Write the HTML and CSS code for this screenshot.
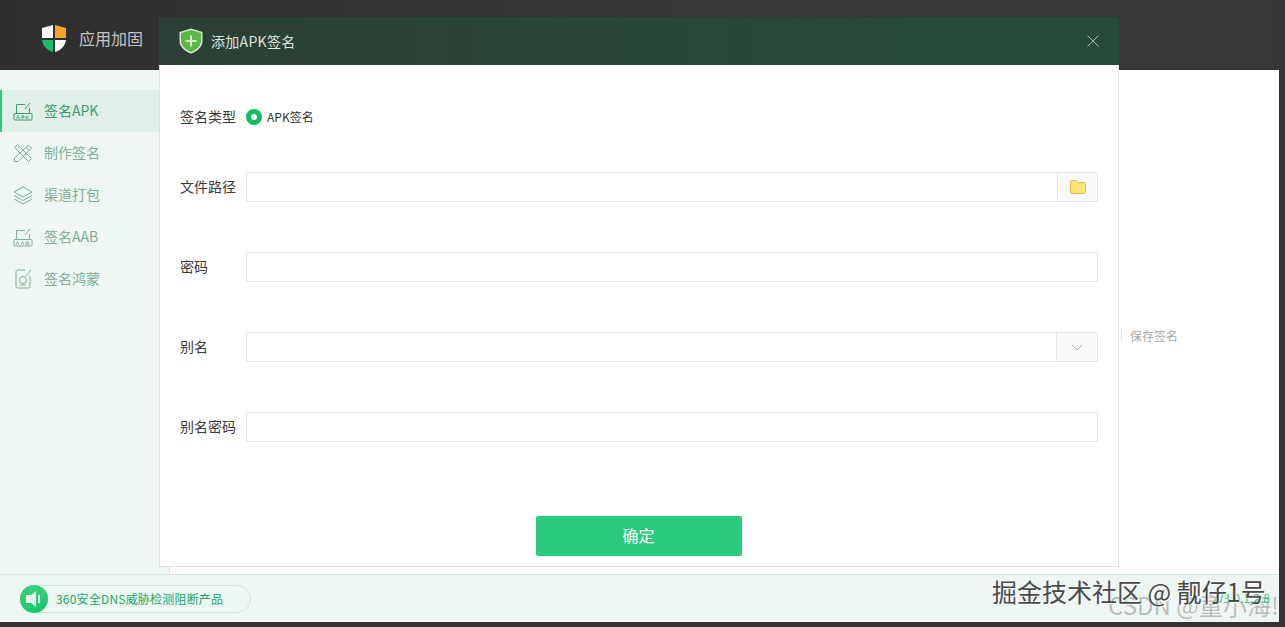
FILE: index.html
```html
<!DOCTYPE html>
<html lang="zh">
<head>
<meta charset="utf-8">
<title>应用加固</title>
<link rel="stylesheet" href="styles.css">
</head>
<body>
<div class="app">
  <header class="topbar">
    <svg class="logo" width="24" height="28" viewBox="0 0 24 28">
      <path d="M0 3 11 0V13H0Z" fill="#fff"/>
      <path d="M13 0 24 3V13H13Z" fill="#f8a524"/>
      <path d="M0 15H11V27C5 25 1 21 0 15Z" fill="#12c06a"/>
      <path d="M13 15H24C23 21 19 25 13 27Z" fill="#fff"/>
    </svg>
    <span class="app-title">应用加固</span>
  </header>
  <div class="middle">
    <nav class="sidebar">
      <a class="nav-item active">
        <svg class="nav-icon" width="20" height="20" viewBox="0 0 20 20" fill="none" stroke="currentColor"><path d="M3.500 12V3.500H12M17 2 12 8M16.500 7V12"/><rect x="1" y="12.500" width="18" height="6.500" rx="1"/><path d="M3.500 18 5 14.500 6.500 18M9 18V14.800H11V16.500H9M13 14.800V18M16 14.800 13.500 16.500 16 18" stroke-width=".8"/></svg>
        <span class="nav-text">签名APK</span>
      </a>
      <a class="nav-item">
        <svg class="nav-icon" width="20" height="20" viewBox="0 0 20 20" fill="none" stroke="currentColor"><path d="M4.500 1.500 1.500 4.500 15.500 18.500 18.500 15.500ZM15.500 2 18.500 5 5 18.500 1.500 18.500 1.500 15ZM13 4.500 16 7.500M6.500 3.500 5 5M10 7 8.500 8.500M13.500 10.500 12 12"/></svg>
        <span class="nav-text">制作签名</span>
      </a>
      <a class="nav-item">
        <svg class="nav-icon" width="20" height="20" viewBox="0 0 20 20" fill="none" stroke="currentColor"><path d="M10 2 19 7 10 12 1 7ZM1 10.500 10 15.500 19 10.500M1 14 10 19 19 14"/></svg>
        <span class="nav-text">渠道打包</span>
      </a>
      <a class="nav-item">
        <svg class="nav-icon" width="20" height="20" viewBox="0 0 20 20" fill="none" stroke="currentColor"><path d="M3.500 12V3.500H12M17 2 12 8M16.500 7V12"/><rect x="1" y="12.500" width="18" height="6.500" rx="1"/><path d="M3 18 4.500 14.500 6 18M8 18 9.500 14.500 11 18M13 14.800V18H15.500C16.500 18 16.500 16.400 15.500 16.400H13M13 14.800H15.500C16.200 14.800 16.200 16.400 15.500 16.400" stroke-width=".8"/></svg>
        <span class="nav-text">签名AAB</span>
      </a>
      <a class="nav-item">
        <svg class="nav-icon" width="20" height="20" viewBox="0 0 20 20" fill="none" stroke="currentColor"><path d="M12 1H5C3.500 1 3 2 3 3V17C3 18.500 3.500 19 5 19H15C16.500 19 17 18.500 17 17V7M18 1 13 7"/><circle cx="10" cy="11" r="3.500"/><path d="M7 16H13"/></svg>
        <span class="nav-text">签名鸿蒙</span>
      </a>
    </nav>
    <main class="content">
      <div class="save-sign"><span class="save-label">保存签名</span></div>
    </main>
  </div>
  <footer class="footer">
    <div class="pill">
      <span class="pill-icon">
        <svg width="18" height="18" viewBox="0 0 18 18" fill="#fff"><path d="M1 5H6L11 1V17L6 13H1Z" fill-opacity=".85"/><rect x="13" y="5" width="2" height="8"/></svg>
      </span>
      <span class="pill-text">360安全DNS威胁检测阻断产品</span>
    </div>
    <span class="version">V3.0.1.2.8</span>
  </footer>
</div>

<section class="dialog">
  <header class="dialog-head">
    <svg class="shield" width="24" height="26" viewBox="0 0 24 26">
      <path d="M12 .5 23.500 4V13C23.500 19 18 23.500 12 25.500 6 23.500 .5 19 .5 13V4Z" fill="#dcebd6"/>
      <path d="M12 2 22 5V13C22 18 17 22 12 24 7 22 2 18 2 13V5Z" fill="#5cb648"/>
      <path d="M11 7.500H13V12H17.500V14H13V18.500H11V14H6.500V12H11Z" fill="#cfeec0"/>
    </svg>
    <h1 class="dialog-title">添加APK签名</h1>
    <svg class="close" width="12" height="12" viewBox="0 0 12 12" fill="none" stroke="#aab8b1"><path d="M.5.500 11.500 11.500M11.500.500 .5 11.500"/></svg>
  </header>
  <form class="dialog-body">
    <div class="type-row">
      <span class="label">签名类型</span>
      <span class="radio"></span>
      <span class="radio-text">APK签名</span>
    </div>
    <div class="fields">
      <div class="field">
        <label class="label">文件路径</label>
        <div class="control"><span class="control-fill"></span>
          <span class="addon addon-file">
            <svg width="16" height="14" viewBox="0 0 16 14"><path d="M.5 2C.5 1 1 .5 2 .5H6L8 2.500H14C15 2.500 15.500 3 15.500 4V12C15.500 13 15 13.500 14 13.500H2C1 13.500 .5 13 .5 12Z" fill="#ffe27a" stroke="#e3b93f"/></svg>
          </span>
        </div>
      </div>
      <div class="field">
        <label class="label">密码</label>
        <div class="control"><span class="control-fill"></span></div>
      </div>
      <div class="field">
        <label class="label">别名</label>
        <div class="control"><span class="control-fill"></span>
          <span class="addon addon-select">
            <svg width="12" height="7" viewBox="0 0 12 7" fill="none" stroke="#aaa"><path d="M1 1 6 6 11 1"/></svg>
          </span>
        </div>
      </div>
      <div class="field">
        <label class="label">别名密码</label>
        <div class="control"><span class="control-fill"></span></div>
      </div>
    </div>
    <button class="confirm" type="button">确定</button>
  </form>
</section>

<div class="mark-csdn">CSDN @童小海!</div>
<div class="mark-juejin">掘金技术社区 @ 靓仔1号</div>
</body>
</html>
```

FILE: styles.css
```css
* { box-sizing: border-box; }
html, body { margin: 0; height: 627px; overflow: hidden; }
body {
  background: #333;
  font-family: "Noto Sans CJK SC", "Noto Sans", sans-serif;
  font-size: 13px;
  color: #333;
}
.app {
  width: 1279px;
  height: 622px;
  display: flex;
  flex-direction: column;
}
.topbar {
  height: 70px;
  flex: none;
  display: flex;
  align-items: center;
  padding: 8px 0 0 42px;
  background: linear-gradient(90deg, #2f2e2e, #393839 60%, #383738);
}
.logo { margin-right: 13px; }
.app-title { color: #c4c4c4; font-size: 16px; padding-bottom: 2px; }
.middle { flex: 1; display: flex; min-height: 0; }
.sidebar {
  width: 170px;
  flex: none;
  padding-top: 20px;
  background: #eef7f3;
  border-right: 1px solid #dfe7e3;
}
.nav-item {
  height: 42px;
  display: flex;
  align-items: center;
  gap: 11px;
  padding-left: 13px;
  color: #7fae98;
  font-size: 14px;
}
.nav-text { padding-bottom: 2px; }
.nav-item.active {
  background: #e0f0e9;
  border-left: 2px solid #2bcb7b;
  padding-left: 11px;
  color: #3c9a6f;
}
.nav-icon { flex: none; }
.content { flex: 1; background: #fff; display: flex; justify-content: flex-end; padding-top: 258px; }
.save-sign { width: 158px; height: 14px; display: flex; align-items: center; border-left: 1px solid #e4e4e4; padding-left: 8px; }
.save-label { font-size: 12px; color: #a9a9a9; }
.footer {
  height: 48px;
  flex: none;
  display: flex;
  align-items: center;
  justify-content: space-between;
  padding: 0 9px 0 20px;
  background: #eef6f3;
  border-top: 1px solid #d8e6e0;
}
.pill {
  width: 231px;
  height: 28px;
  display: flex;
  align-items: center;
  gap: 8px;
  border: 1px solid #c9e5d8;
  border-radius: 14px;
  margin-top: 1px;
}
.pill-icon {
  width: 28px;
  height: 28px;
  margin-left: -1px;
  flex: none;
  display: flex;
  align-items: center;
  justify-content: center;
  border-radius: 50%;
  background: linear-gradient(160deg, #42d27f, #12c46c);
}
.pill-text { font-size: 12px; letter-spacing: .2px; color: #21a862; white-space: nowrap; padding-bottom: 2px; }
.version { font-size: 12px; color: #35c97f; margin-bottom: 2px; }

.dialog {
  position: absolute;
  left: 159px;
  top: 17px;
  width: 960px;
  height: 550px;
  display: flex;
  flex-direction: column;
}
.dialog-head {
  height: 48px;
  flex: none;
  display: flex;
  align-items: center;
  padding: 0 20px;
  background: linear-gradient(90deg, #2d3f36, #274a38 60%, #264c39);
}
.shield { flex: none; margin-right: 8px; }
.dialog-title { flex: 1; margin: 0; font-size: 14px; letter-spacing: .3px; font-weight: 400; color: #dbe4df; padding-bottom: 1px; }
.close { flex: none; }
.dialog-body {
  flex: 1;
  background: #fff;
  border: 1px solid #e2e2e2;
  border-top: 0;
  padding: 42px 20px 0;
  display: flex;
  flex-direction: column;
}
.label { width: 66px; flex: none; font-size: 14px; color: #3a3a3a; padding-bottom: 2px; }
.type-row { height: 20px; display: flex; align-items: center; }
.radio {
  width: 16px;
  height: 16px;
  flex: none;
  border: 5px solid #0dbf5f;
  border-radius: 50%;
  background: #fff;
  margin-right: 5px;
}
.radio-text { font-size: 12px; color: #333; padding-bottom: 1px; }
.fields { margin-top: 45px; display: flex; flex-direction: column; gap: 50px; }
.field { height: 30px; display: flex; align-items: center; }
.control {
  flex: 1;
  height: 30px;
  display: flex;
  border: 1px solid #e6e6e6;
  background: #fff;
}
.control-fill { flex: 1; }
.addon {
  flex: none;
  display: flex;
  align-items: center;
  justify-content: center;
  background: #fafafa;
  border-left: 1px solid #e6e6e6;
}
.addon-file { width: 40px; }
.addon-select { width: 41px; }
.confirm {
  align-self: center;
  width: 206px;
  height: 40px;
  margin-top: 74px;
  margin-left: -1px;
  padding: 0 0 2px;
  border: 0;
  border-radius: 2px;
  background: #2bca7b;
  color: #fff;
  font: 16px "Noto Sans CJK SC", "Noto Sans", sans-serif;
}
.mark-juejin {
  position: absolute;
  left: 992px;
  top: 573px;
  font-size: 25px;
  line-height: 36px;
  white-space: nowrap;
  color: #4a4a4a;
  text-shadow: 1px 1px 0 #fff;
}
.mark-csdn {
  position: absolute;
  left: 1108px;
  top: 587px;
  font-size: 24px;
  line-height: 36px;
  white-space: nowrap;
  color: rgba(120, 120, 120, .45);
}
```
